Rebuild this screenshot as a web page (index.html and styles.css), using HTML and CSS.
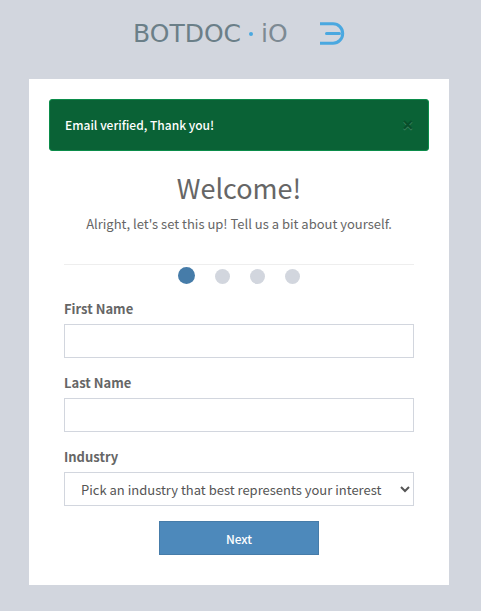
FILE: index.html
```html
<!DOCTYPE html>
<html lang="en">

<head>
  <meta charset="UTF-8" />
  <meta name="viewport" content="width=device-width, initial-scale=1.0" />
  <title>Botdoc.io</title>
  <link rel="stylesheet" href="styles.css">
</head>

<body>
  <header class="logo">
    <span class="logo-name">BOTDOC<span class="logo-dot"></span><span class="logo-tld">iO</span></span>
    <svg class="logo-mark" width="25" height="23" viewBox="0 0 25 23" fill="none" aria-hidden="true">
      <path d="M0 1.8H13A9.7 9.7 0 0 1 13 21.2H0" />
      <path d="M6.5 11.5H19.5" stroke-linecap="round" />
    </svg>
  </header>

  <main class="card">
    <div class="alert" role="alert">
      <span>Email verified, Thank you!</span>
      <button type="button" class="close" aria-label="Close">×</button>
    </div>

    <form class="setup">
      <h1>Welcome!</h1>
      <p class="intro">Alright, let's set this up! Tell us a bit about yourself.</p>
      <hr>

      <ol class="steps">
        <li class="step active"></li>
        <li class="step"></li>
        <li class="step"></li>
        <li class="step"></li>
      </ol>

      <div class="form-group">
        <label for="firstName">First Name</label>
        <input type="text" id="firstName" class="form-control">
      </div>
      <div class="form-group">
        <label for="lastName">Last Name</label>
        <input type="text" id="lastName" class="form-control">
      </div>
      <div class="form-group">
        <label for="industry">Industry</label>
        <select id="industry" class="form-control">
          <option>Pick an industry that best represents your interest</option>
        </select>
      </div>

      <button type="button" class="next-btn">Next</button>
    </form>
  </main>
</body>

</html>
```
FILE: styles.css
```css
* {
  box-sizing: border-box;
}

body {
  margin: 0;
  padding: 0 32px 24px 29px;
  background-color: #d2d6de;
  color: #666;
  font-family: "Source Sans Pro", "Noto Sans CJK SC", sans-serif;
  font-size: 13px;
  line-height: 20px;
}

.logo {
  display: flex;
  justify-content: space-between;
  align-items: center;
  max-width: 212px;
  height: 79px;
  margin: 0 auto;
  padding-bottom: 12px;
}

.logo-name {
  display: flex;
  align-items: center;
  gap: 8px;
  color: #6b7f88;
  font-family: "DejaVu Sans", sans-serif;
  font-size: 25px;
  line-height: 28px;
}

.logo-dot {
  width: 4px;
  height: 4px;
  border-radius: 50%;
  background-color: #4aa8e0;
}

.logo-tld {
  color: #7d8a93;
}

.logo-mark {
  stroke: #4aa8e0;
  stroke-width: 3;
}

.card {
  max-width: 420px;
  margin: 0 auto;
  padding: 20px 20px 30px;
  background-color: #fff;
}

.alert {
  display: flex;
  justify-content: space-between;
  align-items: center;
  padding: 15px;
  border: 1px solid #0b8c4a;
  border-radius: 3px;
  background-color: #0a6236;
  color: #fff;
  font-size: 12px;
  font-weight: 500;
}

.close {
  padding: 0;
  border: 0;
  background: none;
  color: #000;
  font-family: "Liberation Sans", sans-serif;
  font-size: 18px;
  font-weight: 700;
  line-height: 20px;
  opacity: 0.2;
  text-shadow: 0 1px 0 #fff;
  cursor: pointer;
}

.setup {
  padding: 0 15px;
}

h1 {
  margin: 20px 0 10px;
  font-size: 27px;
  font-weight: 400;
  line-height: 33px;
  text-align: center;
}

.intro {
  margin: 0 0 30px;
  text-align: center;
}

hr {
  margin: 0;
  border: 0;
  border-top: 1px solid #eee;
}

.steps {
  display: flex;
  justify-content: center;
  align-items: flex-end;
  gap: 20px;
  margin: 0;
  padding: 2px 0 15px;
  list-style: none;
}

.step {
  width: 15px;
  height: 15px;
  border-radius: 50%;
  background-color: #d2d6de;
}

.step.active {
  width: 17px;
  height: 17px;
  background-color: #467ca9;
}

.form-group {
  margin-bottom: 15px;
}

label {
  display: block;
  margin-bottom: 5px;
  font-weight: 700;
}

.form-control {
  display: block;
  width: 100%;
  height: 34px;
  padding: 6px 12px;
  border: 1px solid #d2d6de;
  border-radius: 0;
  background-color: #fff;
  color: #555;
  font-family: inherit;
  font-size: 13px;
}

select.form-control {
  padding-right: 0;
}

.next-btn {
  display: block;
  width: 160px;
  height: 34px;
  margin: 0 auto;
  border: 1px solid #467ca9;
  background-color: #4d89bb;
  color: #fff;
  font-family: inherit;
  font-size: 12px;
  font-weight: 500;
  cursor: pointer;
}

.next-btn:hover {
  background-color: #467ca9;
}
```
